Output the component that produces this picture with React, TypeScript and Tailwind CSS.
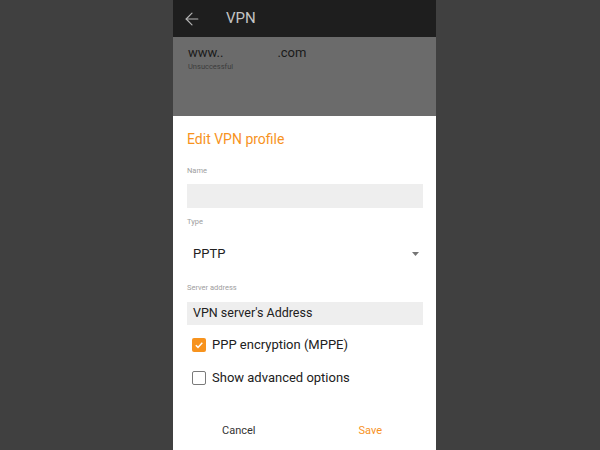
import { ArrowLeft } from 'lucide-react';

export default function App() {
  return (
    <div className="flex h-[450px] w-full overflow-hidden bg-[#404040] pl-[173px] font-['Roboto','Liberation_Sans',sans-serif]">
      <div className="flex w-[263px] flex-col">
        {/* Toolbar */}
        <div className="flex h-[37px] shrink-0 items-center bg-[#1e1e1e]">
          <ArrowLeft className="ml-[9px] text-[#b5b5b5]" size={20} strokeWidth={1.4} />
          <span className="ml-[24px] text-[15px] leading-none text-[#c4c4c4]">VPN</span>
        </div>

        {/* Dimmed list behind the dialog */}
        <div className="h-[79px] shrink-0 bg-[#6b6b6b] pl-[15px] pt-[8px]">
          <div className="flex h-[16px] items-center text-[13px] leading-[16px] text-[#1a1a1a]">
            <span>www..</span>
            <span className="ml-[54px]">.com</span>
          </div>
          <div className="mt-[1px] text-[7.5px] leading-[10px] text-[#3c3c3c]">Unsuccessful</div>
        </div>

        {/* Dialog */}
        <div className="flex-1 bg-white">
          <div className="pl-[14px] pr-[13px]">
            <h2 className="mt-[13px] h-[20px] text-[14px] leading-[20px] text-[#f7931e]">Edit VPN profile</h2>

            <div className="mt-[17px] text-[7.5px] leading-[10px] text-[#9e9e9e]">Name</div>
            <div className="mt-[8px] h-[24px] bg-[#eeeeee]" />

            <div className="mt-[9px] text-[7.5px] leading-[10px] text-[#9e9e9e]">Type</div>
            <div className="mt-[17px] flex h-[20px] items-center justify-between pl-[6px] pr-[4px]">
              <span className="text-[13px] text-[#212121]">PPTP</span>
              <svg width="7" height="4" viewBox="0 0 7 4">
                <path d="M0 0h7L3.5 4z" fill="#757575" />
              </svg>
            </div>

            <div className="mt-[19px] text-[7.5px] leading-[10px] text-[#9e9e9e]">Server address</div>
            <div className="mt-[9px] flex h-[23px] items-center bg-[#eeeeee] pl-[6px] text-[12.5px] text-[#212121]">
              VPN server's Address
            </div>

            <label className="mt-[10px] flex h-[20px] items-center pl-[5px]">
              <span className="flex h-[14px] w-[14px] items-center justify-center rounded-[2px] bg-[#f7931e]">
                <svg width="10" height="10" viewBox="0 0 10 10">
                  <path d="M1.8 5.2l2.2 2.2 4.3-4.6" fill="none" stroke="white" strokeWidth="1.5" />
                </svg>
              </span>
              <span className="ml-[6px] text-[13px] text-[#212121]">PPP encryption (MPPE)</span>
            </label>

            <label className="mt-[13px] flex h-[20px] items-center pl-[5px]">
              <span className="h-[14px] w-[14px] rounded-[2px] border-[1.5px] border-[#7a7a7a]" />
              <span className="ml-[6px] text-[13px] text-[#212121]">Show advanced options</span>
            </label>
          </div>

          <div className="mt-[33px] grid h-[20px] grid-cols-2 items-center text-center text-[11px]">
            <span className="text-[#333333]">Cancel</span>
            <span className="text-[#f7931e]">Save</span>
          </div>
        </div>
      </div>
    </div>
  );
}
